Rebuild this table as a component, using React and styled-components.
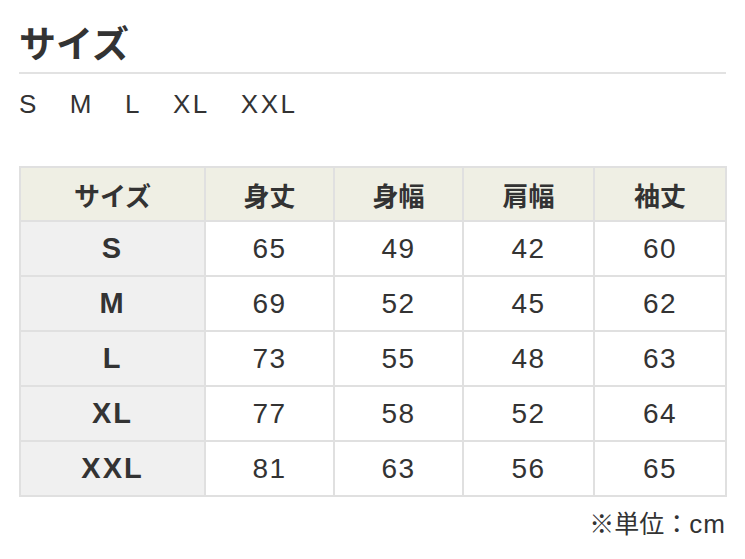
import React from 'react';
import styled, { createGlobalStyle } from 'styled-components';

const GlobalStyle = createGlobalStyle`
  body {
    margin: 0;
    background: #fff;
    color: #333;
    font-family: "Liberation Sans", "Noto Sans CJK JP", sans-serif;
  }
`;

const Page = styled.div`
  padding: 16px 19px 0;
`;

const Title = styled.h2`
  margin: 0;
  padding-bottom: 4px;
  font-family: "Noto Sans CJK JP", sans-serif;
  font-size: 37px;
  font-weight: 700;
  line-height: 52px;
  border-bottom: 2px solid #e2e2e2;
`;

const SizeList = styled.div`
  display: flex;
  gap: 31px;
  margin-top: 12px;
  font-size: 26px;
  letter-spacing: 2.5px;
  line-height: 36px;
`;

const Table = styled.table`
  margin-top: 44px;
  width: 100%;
  border-collapse: collapse;
  table-layout: fixed;
  border: 2px solid #e0e0e0;
`;

const Th = styled.th`
  height: 52px;
  padding: 0;
  background: #efefe4;
  border: 2px solid #e0e0e0;
  font-family: "Noto Sans CJK JP", sans-serif;
  font-size: 26px;
  font-weight: 700;
  text-align: center;
`;

const Td = styled.td`
  height: 53px;
  padding: 0;
  background: ${p => (p.$head ? '#f0f0f0' : '#fff')};
  border: 2px solid #e0e0e0;
  font-size: ${p => (p.$head ? '29px' : '28px')};
  letter-spacing: ${p => (p.$head ? '2px' : '1.5px')};
  font-weight: ${p => (p.$head ? 700 : 400)};
  text-align: center;
`;

const Note = styled.div`
  margin-top: 8px;
  text-align: right;
  font-size: 25px;
  line-height: 34px;
  font-family: "Noto Sans CJK JP", sans-serif;
`;

const Unit = styled.span`
  font-family: "Liberation Sans", sans-serif;
  font-size: 26px;
  letter-spacing: 1px;
`;

const sizes = ['S', 'M', 'L', 'XL', 'XXL'];
const columns = ['サイズ', '身丈', '身幅', '肩幅', '袖丈'];
const widths = [185, 129, 129, 131, 132];

const rows = [
  ['S', 65, 49, 42, 60],
  ['M', 69, 52, 45, 62],
  ['L', 73, 55, 48, 63],
  ['XL', 77, 58, 52, 64],
  ['XXL', 81, 63, 56, 65],
];

export default function App() {
  return (
    <Page>
      <GlobalStyle />
      <Title>サイズ</Title>
      <SizeList>
        {sizes.map(s => (
          <span key={s}>{s}</span>
        ))}
      </SizeList>
      <Table>
        <colgroup>
          {widths.map((w, i) => (
            <col key={i} style={{ width: w }} />
          ))}
        </colgroup>
        <thead>
          <tr>
            {columns.map(c => (
              <Th key={c}>{c}</Th>
            ))}
          </tr>
        </thead>
        <tbody>
          {rows.map(r => (
            <tr key={r[0]}>
              {r.map((v, i) => (
                <Td key={i} $head={i === 0}>{v}</Td>
              ))}
            </tr>
          ))}
        </tbody>
      </Table>
      <Note>※単位：<Unit>cm</Unit></Note>
    </Page>
  );
}
